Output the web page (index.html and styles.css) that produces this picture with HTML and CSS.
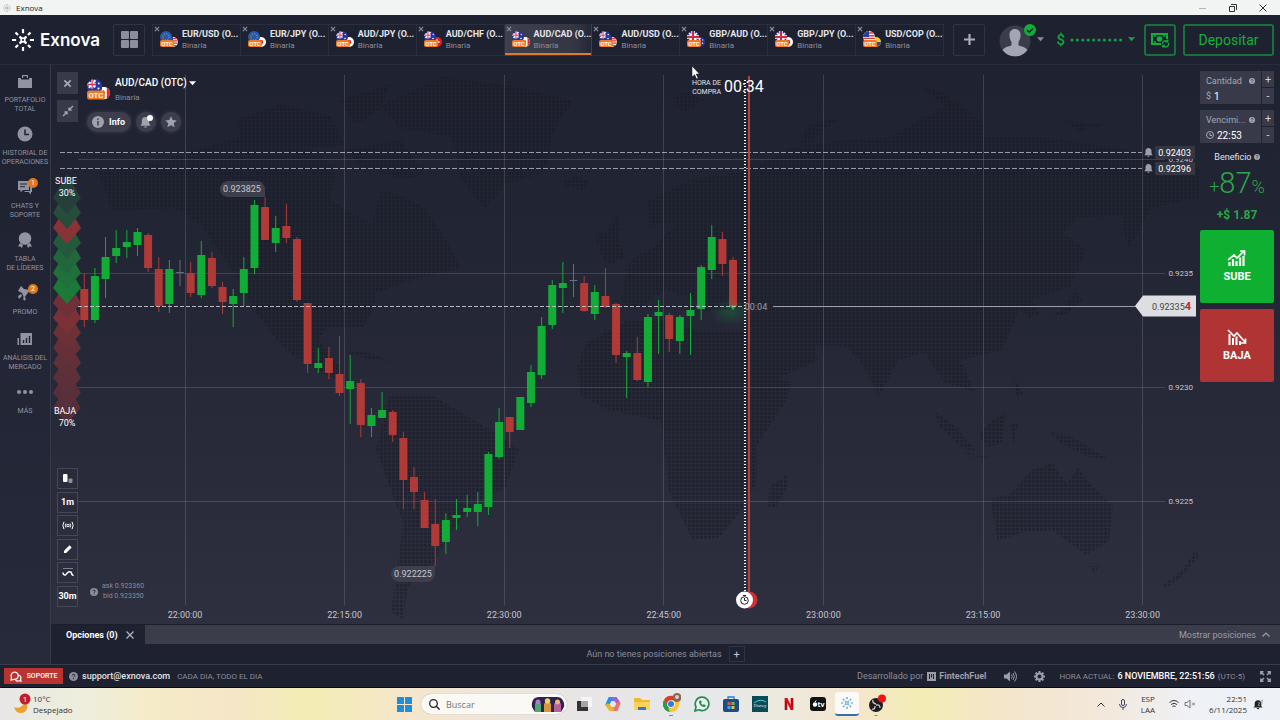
FILE: index.html
```html
<!DOCTYPE html>
<html lang="es">
<head>
    <meta charset="UTF-8">
    <meta name="viewport" content="width=device-width, initial-scale=1.0">
    <title>Exnova</title>
    <link rel="stylesheet" href="styles.css">
</head>
<body>
    <!-- shared icons -->
    <svg class="sprite" aria-hidden="true">
        <symbol id="exnova" viewBox="0 0 24 24">
            <g fill="none" stroke="currentColor" stroke-width="2.4">
                <path d="M12 0v4.500M12 19.500v4.500M0 12h4.500M19.500 12h4.500M3.800 3.800l2.800 2.800M17.400 17.400l2.800 2.800M20.200 3.800l-2.800 2.800M6.600 17.400l-2.800 2.800"/>
                <path stroke-width="1.800" d="M8.500 8q3.500 4.500 7 0M8.500 16q3.500-4.500 7 0M8 8.500q4.500 3.500 0 7M16 8.500q-4.500 3.500 0 7"/>
            </g>
        </symbol>
        <symbol id="close" viewBox="0 0 10 10"><path d="M1.500 1.500l7 7M8.500 1.500l-7 7" stroke="currentColor" stroke-width="2" fill="none"/></symbol>
        <symbol id="caret" viewBox="0 0 8 5"><path d="M0 0h8l-4 4.500z" fill="currentColor"/></symbol>
        <symbol id="help" viewBox="0 0 12 12"><circle cx="6" cy="6" r="6" fill="currentColor"/><path d="M4.200 4.700c0-2.300 3.700-2.300 3.700 0 0 1.300-1.800 1.300-1.800 2.600M6.100 8.300v1.300" fill="none" stroke="#1e2130" stroke-width="1.300"/></symbol>
        <symbol id="bell" viewBox="0 0 12 12"><path d="M6 0c-2.600 0-4 1.800-4 4v3L.5 9.500h11L10 7V4c0-2.200-1.400-4-4-4zM4.500 10.300a1.500 1.500 0 0 0 3 0z" fill="currentColor"/></symbol>
        <symbol id="flag-eur" viewBox="0 0 12 12"><circle cx="6" cy="6" r="6" fill="#2459b5"/><circle cx="6" cy="6" r="3.200" fill="none" stroke="#d8b83c" stroke-width="1" stroke-dasharray="1 1.500"/></symbol>
        <symbol id="flag-usd" viewBox="0 0 12 12"><circle cx="6" cy="6" r="6" fill="#f2f2f4"/><path d="M2 2h8.500M.5 4.700h11M.2 7.400h11.500M1.500 10.200h9" stroke="#d43840" stroke-width="1.400"/><path d="M6 0a6 6 0 0 0-6 6h6z" fill="#2b3f96"/></symbol>
        <symbol id="flag-jpy" viewBox="0 0 12 12"><circle cx="6" cy="6" r="6" fill="#fff"/><circle cx="6" cy="6" r="2.700" fill="#dc2436"/></symbol>
        <symbol id="flag-chf" viewBox="0 0 12 12"><circle cx="6" cy="6" r="6" fill="#d8232e"/><path d="M6 3v6M3 6h6" stroke="#fff" stroke-width="2"/></symbol>
        <symbol id="flag-cad" viewBox="0 0 12 12"><circle cx="6" cy="6" r="6" fill="#fff"/><path d="M3 .8a6 6 0 0 0 0 10.400zM9 .8a6 6 0 0 1 0 10.400zM6 3l1.500 3L6 8 4.500 6z" fill="#dc2a34"/></symbol>
        <symbol id="flag-aud" viewBox="0 0 12 12"><circle cx="6" cy="6" r="6" fill="#2436a8"/><path d="M1.500 2.500l5 4M6.500 1l-5 6M4 .5v7M.3 4.200H7" stroke="#fff" stroke-width="1.600"/><path d="M4 .5v7M.3 4.200H7" stroke="#dc2a44" stroke-width=".9"/><circle cx="9.200" cy="3.500" r=".7" fill="#fff"/><circle cx="9" cy="7.500" r=".8" fill="#fff"/></symbol>
        <symbol id="flag-gbp" viewBox="0 0 12 12"><circle cx="6" cy="6" r="6" fill="#2c3c96"/><path d="M2 2l8 8M10 2l-8 8" stroke="#fff" stroke-width="1.700"/><path d="M6 0v12M0 6h12" stroke="#fff" stroke-width="3.400"/><path d="M6 0v12M0 6h12" stroke="#d22a44" stroke-width="2"/></symbol>
        <symbol id="flag-cop" viewBox="0 0 12 12"><circle cx="6" cy="6" r="6" fill="#f5cc2a"/><path d="M0 6h12a6 6 0 0 1-1.500 4h-9A6 6 0 0 1 0 6z" fill="#2c4aa8"/><path d="M1.500 9.500h9a6 6 0 0 1-9 0z" fill="#d22a34"/></symbol>
    </svg>

    <div class="titlebar">
        <svg class="titlebar-logo" width="8" height="8"><use href="#exnova"/></svg>
        <span>Exnova</span>
        <div class="window-buttons">
            <svg width="8" height="8" viewBox="0 0 8 8"><path d="M0 4.500h7" stroke="#b5b5b8"/></svg>
            <svg width="8" height="8" viewBox="0 0 8 8"><path d="M.5 2.500h5v5h-5zM2 .5h5.500V6" fill="none" stroke="#333"/></svg>
            <svg width="8" height="8" viewBox="0 0 8 8"><path d="M.5.500l7 7M7.500.500l-7 7" stroke="#333"/></svg>
        </div>
    </div>

    <header class="topbar">
        <a class="brand" href="#">
            <svg width="22" height="22"><use href="#exnova"/></svg>
            <span>Exnova</span>
        </a>
        <button class="square-button" aria-label="Vista">
            <svg width="17" height="17" viewBox="0 0 17 17" fill="#8b8d9a"><rect width="8" height="8" rx="1"/><rect x="9" width="8" height="8" rx="1"/><rect y="9" width="8" height="8" rx="1"/><rect x="9" y="9" width="8" height="8" rx="1"/></svg>
        </button>
        <nav class="tabs" id="tabs"></nav>
        <button class="square-button" aria-label="Agregar activo">
            <svg width="11" height="11" viewBox="0 0 11 11"><path d="M5.500 0v11M0 5.500h11" stroke="#a9abb6" stroke-width="2.200"/></svg>
        </button>
        <button class="profile" aria-label="Perfil">
            <svg width="38" height="36" viewBox="0 0 38 36">
                <circle cx="16" cy="20" r="15.500" fill="#3a3c4b"/>
                <path d="M16 8c-4 0-6 3-5.500 7 .3 3 1 4.500 2 6v3.500c-3.500.8-7 2-9 4.500a15.500 15.500 0 0 0 25 0c-2-2.500-5.500-3.700-9-4.500V21c1-1.500 1.700-3 2-6 .5-4-1.500-7-5.500-7z" fill="#a3a5b2"/>
                <circle cx="31" cy="9" r="6" fill="#0fae38"/>
                <path d="M28 9l2.300 2.300L34 7.500" fill="none" stroke="#1e2130" stroke-width="1.500"/>
            </svg>
            <svg class="muted" width="7" height="5"><use href="#caret"/></svg>
        </button>
        <button class="balance">
            <span class="balance-sign">$</span>
            <svg width="53" height="4" viewBox="0 0 53 4"><path d="M2 2h50" stroke="currentColor" stroke-width="3" stroke-linecap="round" stroke-dasharray="0 5.400"/></svg>
            <svg width="7" height="5"><use href="#caret"/></svg>
        </button>
        <button class="cash-button" aria-label="Retirar">
            <svg width="20" height="16" viewBox="0 0 20 16" fill="none" stroke="currentColor">
                <path d="M11 12H2V2h15v5" stroke-width="2"/>
                <circle cx="9.500" cy="7" r="2.800" fill="currentColor" stroke="none"/>
                <path d="M4 4h2M4 10h2M13 4h2" stroke-width="1.600"/>
                <path d="M12.500 12a3 3 0 0 1 5-2.500M18.500 11a3 3 0 0 1-5 3M17.800 7.500v2.300h-2.300M12.800 15.500v-2h2" stroke-width="1.300"/>
            </svg>
        </button>
        <button class="deposit-button">Depositar</button>
    </header>

    <div class="workspace">
        <aside class="sidebar">
            <a class="side-item" href="#">
                <svg width="16" height="16" viewBox="0 0 16 16"><path d="M1 5h3v1.500h8V5h3v10H1zM5 5V2h6v3" fill="currentColor"/><path d="M6.200 5V3.200h3.600V5z" fill="#1f2231"/></svg>
                <span>PORTAFOLIO<br>TOTAL</span>
            </a>
            <a class="side-item" href="#">
                <svg width="16" height="16" viewBox="0 0 16 16"><circle cx="8" cy="8" r="7.500" fill="currentColor"/><path d="M8 3.500V8.500h4" fill="none" stroke="#1f2231" stroke-width="1.500"/></svg>
                <span>HISTORIAL DE<br>OPERACIONES</span>
            </a>
            <a class="side-item" href="#">
                <svg width="16" height="16" viewBox="0 0 16 16"><path d="M1 2h11v9H6l-2.500 2.500V11H1z" fill="currentColor"/><path d="M13 5h2v8h-1v2.500L11.500 13H7.500v-1H13z" fill="currentColor"/><path d="M3 5h7M3 7.700h5" stroke="#1f2231"/></svg>
                <span>CHATS Y<br>SOPORTE</span>
                <i class="badge">1</i>
            </a>
            <a class="side-item" href="#">
                <svg width="16" height="16" viewBox="0 0 16 16" fill="currentColor"><circle cx="8" cy="6.500" r="6.300"/><path d="M3 11l3 2-1 3-1.500-1.500H1zM13 11l-3 2 1 3 1.500-1.500H15z"/></svg>
                <span>TABLA<br>DE LÍDERES</span>
            </a>
            <a class="side-item" href="#">
                <svg width="16" height="16" viewBox="0 0 16 16" fill="currentColor"><path d="M4 1l3 3 6 1-6 8-2-5-4-2zM1 11l3-2 1 2-3 3zM6 13l1.500-1.500L9 14l-2 2z"/></svg>
                <span>PROMO</span>
                <i class="badge">2</i>
            </a>
            <a class="side-item" href="#">
                <svg width="16" height="16" viewBox="0 0 16 16"><path d="M3.500 2h11.500v12H3.500zM.5 7H2v7H.5z" fill="currentColor"/><path d="M6.500 12V9M9.500 12V7M12.500 12V5" stroke="#1f2231" stroke-width="1.400"/></svg>
                <span>ANÁLISIS DEL<br>MERCADO</span>
            </a>
            <a class="side-item" href="#">
                <svg width="16" height="16" viewBox="0 0 16 16" fill="currentColor"><circle cx="2" cy="8" r="2"/><circle cx="8" cy="8" r="2"/><circle cx="14" cy="8" r="2"/></svg>
                <span>MÁS</span>
            </a>
        </aside>

        <main class="content">
            <div class="trading">
                <section class="chart">
                    <svg class="chart-canvas" viewBox="51 65 1149 559" preserveAspectRatio="xMidYMid meet">
                        <defs>
                            <pattern id="dots" width="4" height="4" patternUnits="userSpaceOnUse"><rect width="3" height="3" fill="#171925"/></pattern>
                            <radialGradient id="glow"><stop offset="0" stop-color="#12b03a" stop-opacity=".25"/><stop offset="1" stop-color="#12b03a" stop-opacity="0"/></radialGradient>
                        </defs>
                        <g class="map" fill="url(#dots)">
                            <path d="M99 172L157 162L237 137L318 151L336 172L330 200L355 215L372 225L380 190L400 195L425 208L452 250L461 268L429 275L400 284L376 293L371 314L362 328L327 328L318 340L340 367L336 380L300 360L282 346L255 311L229 265L202 225L175 208L112 211z"/>
                            <path d="M237 120L280 104L330 116L345 145L310 148L240 140zM345 150L400 140L425 175L400 180L360 165zM340 100L390 84L380 110L355 125z"/>
                            <path d="M380 105L443 77L519 87L572 101L554 130L545 172L505 185L485 208L461 179L452 137L400 128z"/>
                            <path d="M563 180l14-4 13 6-8 8-16-3zM340 350l30 3 20 8-22-2zM672 98l14-6 16 8-18 14z"/>
                            <path d="M389 396L434 396L492 431L519 449L505 488L475 503L452 530L434 562L415 575L407 591L403 619L391 612L398 562L403 523L376 449z"/>
                            <path d="M586 343L626 321L673 321L700 332L753 332L768 378L791 382L787 399L757 445L757 481L742 509L719 538L692 539L669 491L661 421L608 410L581 396L577 367z"/>
                            <path d="M768 506l2-20 18-12-2 16-11 18zM599 250l8-20 12-16-1 24 7 20-18 6zM598 233l9 0v10l-10 2z"/>
                            <path d="M623 285L631 260L655 246L677 222L650 225L648 201L692 179L745 172L791 148L845 140L891 137L914 123L956 101L983 123L983 137L1040 137L1136 151L1200 169L1200 197L1151 208L1128 250L1122 215L1078 218L1063 233L1086 250L1071 286L1032 300L1040 314L1030 318L1020 308L1013 325L1002 350L960 360L975 392L944 382L925 353L898 360L879 396L860 360L845 346L814 346L818 360L765 385L753 335L745 307L707 311L688 296L665 290L640 308L622 304z"/>
                            <path d="M798 143l12-18 32-8-20 14-16 18zM922 88l18 2 16 14-8 4zM1065 121l40 4-26 6zM1075 290l8 10-16 14-16 4 14-12z"/>
                            <path d="M933 410l22 16 22 26-14-4-22-20zM979 435l14-16 13-6-4 30-14 4zM964 452l28 6-18-1zM1010 425l8-2-4 22zM1048 431l24 6 36 22-20-2-24-12zM1013 376l10 18-6 4z"/>
                            <path d="M990 499L1009 495L1032 470L1052 463L1067 484L1078 467L1092 486L1113 506L1109 541L1086 555L1052 530L1020 533L998 541zM1090 566h9l-4 8zM1163 584l18-12 14-22 4 6-20 24-14 8z"/>
                        </g>
                        <g class="grid">
                            <path d="M185.500 75V605M344.500 75V605M504.500 75V605M663.500 75V605M823.500 75V605M983.500 75V605M1142.500 75V605"/>
                            <path d="M78 159.500H1165M78 273.500H1165M78 387.500H1165M78 501.500H1165"/>
                        </g>
                        <path class="alert-line" d="M60 152.500H1142M60 168.500H1142"/>
                        <g id="mood"></g>
                        <g id="candles"></g>
                        <ellipse cx="731" cy="312" rx="22" ry="14" fill="url(#glow)"/>
                        <path class="price-dash" d="M78 306.500H742"/>
                        <path class="price-line" d="M773 306.500H1137"/>
                        <g class="peak">
                            <path d="M228 181h29a8 8 0 0 1 8 8v8h-37a8 8 0 0 1 0-16zM399 566h36v8a8 8 0 0 1-8 8h-28a8 8 0 0 1 0-16z"/>
                            <text x="242" y="192">0.923825</text>
                            <text x="413" y="577">0.922225</text>
                        </g>
                        <path class="red-line" d="M749 76V598"/>
                        <path class="dead-line" d="M745 80V592"/>
                        <text class="countdown" x="756" y="310">00:04</text>
                        <circle cx="749" cy="600" r="8.500" fill="#cf3035"/>
                        <circle cx="744.500" cy="600" r="8.500" fill="#fff"/>
                        <g fill="none" stroke="#222"><circle cx="744.500" cy="600.500" r="3.800"/><path d="M743 595.500h3M744.500 600.500v-2.500M744.500 600.500h2"/></g>
                        <g class="axis-x" id="axis-x"></g>
                        <g class="axis-y">
                            <text x="1193" y="162">0.9240</text><text x="1193" y="276">0.9235</text><text x="1193" y="390">0.9230</text><text x="1193" y="504">0.9225</text>
                            <rect x="1155" y="146" width="40" height="13" rx="1"/><rect x="1155" y="162" width="40" height="13" rx="1"/>
                            <text class="alert-price" x="1191" y="156">0.92403</text><text class="alert-price" x="1191" y="172">0.92396</text>
                        </g>
                        <g class="alert-bells"><use href="#bell" x="1144" y="148" width="9" height="9"/><use href="#bell" x="1144" y="164" width="9" height="9"/></g>
                        <path d="M1135 306L1143 295.500H1196V316.500H1143z" fill="#dddee2"/>
                        <text class="price-now" x="1152" y="310">0.92335<tspan>4</tspan></text>
                        <g class="mood-text">
                            <text x="66" y="184">SUBE</text><text x="67" y="196">30%</text>
                            <text x="65" y="414">BAJA</text><text x="67" y="426">70%</text>
                        </g>
                        <g class="buy-time">
                            <text x="721" y="85">HORA DE</text><text x="721" y="94">COMPRA</text>
                            <text class="buy-clock" x="724" y="92">00:34</text>
                        </g>
                        <g class="spread">
                            <use href="#help" x="90" y="588" width="8" height="8"/>
                            <text x="102" y="588">ask 0.923360</text><text x="103" y="598">bid 0.923350</text>
                        </g>
                        <path d="M692 66v11l2.600-2.300 2 4.300 1.600-.8-2-4.200h3.300z" fill="#fff" stroke="#111" stroke-width=".5"/>
                    </svg>

                    <div class="asset">
                        <div class="asset-actions">
                            <button aria-label="Cerrar"><svg width="9" height="9"><use href="#close"/></svg></button>
                            <button aria-label="Reducir"><svg width="12" height="12" viewBox="0 0 12 12"><path d="M1 11l4-4M11 1L7 5M2.500 7H5v2.500M7 2.500V5h2.500" fill="none" stroke="currentColor" stroke-width="1.300"/></svg></button>
                        </div>
                        <div>
                            <button class="asset-name">
                                <svg class="pair-icon" width="23" height="23" viewBox="0 0 18 18"><use href="#flag-cad" x="8" y="6" width="10" height="10"/><use href="#flag-aud" width="12" height="12"/><rect y="9" width="14" height="7" rx="2" fill="#f07a22"/><text class="otc" x="7" y="15">OTC</text></svg>
                                <span class="asset-text">
                                    <b>AUD/CAD (OTC) <svg width="7" height="5"><use href="#caret"/></svg></b>
                                    <small>Binaria</small>
                                </span>
                            </button>
                            <div class="chips">
                                <button class="chip"><svg width="12" height="12" viewBox="0 0 12 12"><circle cx="6" cy="6" r="6" fill="#9fa1ad"/><path d="M6 5v4.500M6 2.500V4" stroke="#3c3e4d" stroke-width="1.500"/></svg> Info</button>
                                <button class="chip round" aria-label="Alertas"><svg width="14" height="14" viewBox="0 0 14 14"><use href="#bell" x="1" y="2" width="11" height="11"/><circle cx="11" cy="3" r="3" fill="#fff"/></svg></button>
                                <button class="chip round" aria-label="Favorito"><svg width="12" height="12" viewBox="0 0 12 12"><path d="M6 .3l1.700 3.800 4.100.4-3.100 2.700.9 4.100L6 9.200l-3.600 2.100.9-4.100L.2 4.500l4.100-.4z" fill="currentColor"/></svg></button>
                            </div>
                        </div>
                    </div>

                    <div class="chart-tools">
                        <button aria-label="Tipo de gráfico"><svg width="11" height="10" viewBox="0 0 11 10"><rect x="1" y="0" width="4.500" height="8" rx="1" fill="#fff"/><rect x="6.500" y="4.500" width="4" height="4.500" rx="1" fill="#8e909c"/></svg></button>
                        <button>1m</button>
                        <button aria-label="Señales"><svg width="12" height="9" viewBox="0 0 12 9" fill="none" stroke="#fff"><circle cx="6" cy="4.500" r="1.200"/><path d="M4 2.500q-1.300 2 0 4M8 2.500q1.300 2 0 4M2 .8Q-.3 4.500 2 8.200M10 .8q2.300 3.700 0 7.400"/></svg></button>
                        <button aria-label="Dibujar"><svg width="10" height="10" viewBox="0 0 10 10"><path d="M1 9V6.800L6.500 1.300l2.200 2.200L3.200 9z" fill="#fff"/></svg></button>
                        <button aria-label="Indicadores"><svg width="12" height="9" viewBox="0 0 12 9" fill="none"><path d="M1 .5h10" stroke="#7d7f8c"/><path d="M1 4.500C1 7 3 8 4.500 5.800S9 3 9.500 5 10.500 7.500 11.500 7" stroke="#fff" stroke-width="1.500"/></svg></button>
                        <button>30m</button>
                    </div>
                </section>

                <section class="deal">
                    <div class="field">
                        <label for="amount">Cantidad <svg width="6" height="6"><use href="#help"/></svg></label>
                        <div class="field-value"><span>$</span><input id="amount" type="text" value="1"></div>
                        <div class="stepper"><button>+</button><button>-</button></div>
                    </div>
                    <div class="field">
                        <label for="expiry">Vencimi... <svg width="6" height="6"><use href="#help"/></svg></label>
                        <div class="field-value"><svg width="8" height="8" viewBox="0 0 8 8" fill="none" stroke="currentColor"><circle cx="4" cy="4" r="3.500"/><path d="M4 4.500V2M4 4.500h2"/></svg><input id="expiry" type="text" value="22:53"></div>
                        <div class="stepper"><button>+</button><button>-</button></div>
                    </div>
                    <div class="profit">
                        <p class="profit-label">Beneficio <svg width="6" height="6"><use href="#help"/></svg></p>
                        <p class="profit-rate"><small>+</small>87<small>%</small></p>
                        <p class="profit-sum">+$ 1.87</p>
                    </div>
                    <button class="call">
                        <svg width="20" height="16" viewBox="0 0 20 16"><path d="M1 10l6-5 3 3 7-7M13 1h4.500v4.500" fill="none" stroke="#fff" stroke-width="1.700"/><path d="M2.500 16v-4M6 16V9M9.500 16v-5M13 16V7.500M16.500 16V6" stroke="#fff" stroke-width="2.200"/></svg>
                        SUBE
                    </button>
                    <button class="put">
                        <svg width="20" height="16" viewBox="0 0 20 16"><path d="M1 1l6 6 3-3 8 9M13 14h5.500V9.500" fill="none" stroke="#fff" stroke-width="1.700"/><path d="M2.500 16V5M6 16V9M9.500 16V7.500M13 16v-4" stroke="#fff" stroke-width="2"/></svg>
                        BAJA
                    </button>
                </section>
            </div>

            <div class="positions-bar">
                <div class="positions-tab">Opciones (0) <button aria-label="Cerrar"><svg width="8" height="8" viewBox="0 0 8 8"><path d="M.5.500l7 7M7.500.500l-7 7" stroke="currentColor" stroke-width="1.200"/></svg></button></div>
                <button class="show-positions">Mostrar posiciones <svg width="8" height="5" viewBox="0 0 8 5"><path d="M.5 4.500L4 1l3.500 3.500" fill="none" stroke="currentColor" stroke-width="1.200"/></svg></button>
            </div>
            <div class="positions-empty">Aún no tienes posiciones abiertas <button aria-label="Agregar">+</button></div>
        </main>
    </div>

    <footer class="statusbar">
        <button class="support"><svg width="12" height="11" viewBox="0 0 12 11" fill="none" stroke="#fff" stroke-width="1.200"><path d="M1 9l.5-2.500A3.600 3.600 0 1 1 4 8.300zM8.500 4a3 3 0 0 1 2 4.500l.5 1.700-2-.5a3 3 0 0 1-3.500-.7"/></svg> SOPORTE</button>
        <svg class="status-help" width="9" height="9"><use href="#help"/></svg>
        <a class="mail" href="#">support@exnova.com</a>
        <span class="hours">CADA DIA, TODO EL DIA</span>
        <span class="powered">Desarrollado por</span>
        <svg width="9" height="9" viewBox="0 0 9 9"><rect width="9" height="9" fill="#9a9ca8"/><path d="M2.500 2v5M4.500 2v3.500M6.500 2v5" stroke="#1e2130"/></svg>
        <b class="fuel">FintechFuel</b>
        <button class="icon-button" aria-label="Sonido"><svg width="13" height="11" viewBox="0 0 13 11"><path d="M0 3.500h2.500L6 .5v10L2.500 7.500H0z" fill="currentColor"/><path d="M7.500 3.500q1.500 2 0 4M9 2q2.700 3.500 0 7M10.500.500q4 5 0 10" fill="none" stroke="currentColor"/></svg></button>
        <button class="icon-button" aria-label="Ajustes"><svg width="11" height="11" viewBox="0 0 11 11"><circle cx="5.500" cy="5.500" r="3" fill="none" stroke="currentColor" stroke-width="2"/><path d="M5.500 0v2M5.500 9v2M0 5.500h2M9 5.500h2M1.600 1.600L3 3M8 8l1.400 1.400M9.400 1.600L8 3M3 8L1.600 9.400" stroke="currentColor" stroke-width="2"/></svg></button>
        <span class="clock">HORA ACTUAL: <b>6 NOVIEMBRE, 22:51:56</b> (UTC-5)</span>
        <button class="icon-button last" aria-label="Pantalla completa"><svg width="11" height="11" viewBox="0 0 11 11" fill="none" stroke="currentColor" stroke-width="1.500"><path d="M.8 3.500V.800H3.500M7.500.800h2.700v2.700M10.200 7.500v2.700H7.500M3.500 10.200H.8V7.500M1 1l3 3M10 1L7 4M10 10L7 7M1 10l3-3"/></svg></button>
    </footer>

    <div class="taskbar">
        <div class="weather">
            <svg width="18" height="22" viewBox="0 0 18 22"><path d="M1 14c4 2 9 0 11-5 5 5 1 12-5 11-3 0-5-3-6-6z" fill="#eea02c"/><circle cx="12" cy="6" r="5.500" fill="#c01f26"/><text x="12" y="9">1</text></svg>
            <p>10°C<br>Despejado</p>
        </div>
        <div class="apps">
            <svg width="15" height="15" viewBox="0 0 15 15" fill="#1f8fdc"><rect width="7" height="7"/><rect x="8" width="7" height="7"/><rect y="8" width="7" height="7"/><rect x="8" y="8" width="7" height="7"/></svg>
            <label class="search">
                <svg width="11" height="11" viewBox="0 0 11 11" fill="none" stroke="#222" stroke-width="1.300"><circle cx="4.500" cy="4.500" r="3.800"/><path d="M7.300 7.300l3.300 3.300"/></svg>
                <input type="text" placeholder="Buscar">
                <svg width="34" height="16" viewBox="0 0 34 16"><path d="M1 11C0 5 3 1 8 1h18c5 0 8 5 7 10l-3 5H4z" fill="#2d2350"/><path d="M4 16V8q3-6 6 0v8z" fill="#4ca86c"/><circle cx="7" cy="6" r="2.500" fill="#b07ad0"/><path d="M13 16V8q4-6 7 0v8z" fill="#d8963c"/><circle cx="16.500" cy="5" r="2.700" fill="#f2d060"/><path d="M23 16V8q4-6 7 0v8z" fill="#b65fa0"/><circle cx="26.500" cy="6" r="2.500" fill="#f2b078"/></svg>
            </label>
            <svg width="16" height="16" viewBox="0 0 16 16"><path d="M5 1h11v10H5z" fill="#f6f6f6"/><path d="M1 5h11v10H1z" fill="#333"/><path d="M5 5h7v6H5z" fill="#a5a5a8"/></svg>
            <svg width="16" height="16" viewBox="0 0 16 16" fill="none" stroke-width="4" stroke-linecap="round"><path d="M2.500 8.500L5 3h3.500" stroke="#2a8de0"/><path d="M9 3h1.500l2.500 3.500" stroke="#a060d8"/><path d="M13.500 7.500L11 13H8" stroke="#f0706c"/><path d="M7 13H5.500L3 9.500" stroke="#e8b62c"/></svg>
            <svg width="16" height="16" viewBox="0 0 16 16"><path d="M0 2h6l2 2h8v10H0z" fill="#f2b92f"/><path d="M0 6h16v8H0z" fill="#fbd25a"/><path d="M4 11h8v3H4z" fill="#2e7ccc"/></svg>
            <svg width="18" height="24" viewBox="0 0 18 24"><circle cx="8" cy="12" r="8" fill="#fbc52c"/><path d="M1 8a8 8 0 0 1 14 0H8l-3.500 6z" fill="#e0392f"/><path d="M1 8l5 7-1 4.500A8 8 0 0 1 1 8z" fill="#2c9e4b"/><path d="M3 13l4 7A8 8 0 0 1 1 16z" fill="#2c9e4b"/><circle cx="8" cy="12" r="3.800" fill="#fff"/><circle cx="8" cy="12" r="3" fill="#3478e0"/><circle cx="14" cy="5.500" r="4.500" fill="#8a6458"/><circle cx="14" cy="5" r="2" fill="#e8cdbc"/><path d="M6 23.500h4" stroke="#888"/></svg>
            <svg width="16" height="16" viewBox="0 0 16 16"><path d="M1 15l1-4a6.800 6.800 0 1 1 2.700 2.800z" fill="#e8f3ec" stroke="#2a8a54" stroke-width="1.700"/><path d="M5 5c0 4 3 6 6 6l.8-1.800-2-1-1 .8L7 7.200l.7-1-.8-2z" fill="#2a8a54"/></svg>
            <svg width="16" height="16" viewBox="0 0 16 16"><path d="M5 4V1h6v3" fill="none" stroke="#2a7cc4" stroke-width="1.300"/><rect y="3" width="16" height="13" rx="2" fill="#1c4c88"/><path d="M4.500 6h3v3h-3z" fill="#e8503a"/><path d="M8.500 6h3v3h-3z" fill="#7cba3c"/><path d="M4.500 10h3v3h-3z" fill="#3aa4e8"/><path d="M8.500 10h3v3h-3z" fill="#f4bc30"/></svg>
            <svg class="disney" width="16" height="16" viewBox="0 0 16 16"><rect width="16" height="16" fill="#0d4a58"/><path d="M2 7q6-5 12-1" fill="none" stroke="#3fd0d0"/><text x="8" y="11">Disney</text></svg>
            <svg width="16" height="16" viewBox="0 0 16 16"><path d="M5 2v12M11 2v12" stroke="#b00710" stroke-width="2.600"/><path d="M3.700 2h2.600l6 12H9.700z" fill="#e50914"/></svg>
            <svg class="apple-tv" width="16" height="16" viewBox="0 0 16 16"><rect y="1" width="16" height="14" rx="3" fill="#111"/><circle cx="5" cy="8.500" r="2.200" fill="#fff"/><path d="M5 6l1.200-1.500" stroke="#fff"/><text x="11" y="11">tv</text></svg>
            <span class="active-app"><svg width="12" height="12"><use href="#exnova"/></svg></span>
            <svg width="18" height="24" viewBox="0 0 18 24"><circle cx="8" cy="13" r="7" fill="#1c1c1f"/><path d="M8 12q-4-1-3-4M8 13q4-1 4 3M7 14q0 4-3 3" fill="none" stroke="#c8c8cc" stroke-width="1.300"/><circle cx="14" cy="6.500" r="4" fill="#f01414"/><path d="M6.500 23.500h3" stroke="#888"/></svg>
        </div>
        <div class="tray">
            <svg width="8" height="5" viewBox="0 0 8 5"><path d="M.5 4.500L4 1l3.500 3.500" fill="none" stroke="#333"/></svg>
            <svg width="8" height="11" viewBox="0 0 8 11" fill="none" stroke="#446"><rect x="2.500" y=".5" width="3" height="6" rx="1.500"/><path d="M.5 5q0 3.500 3.500 3.500T7.500 5M4 8.500V11"/></svg>
            <p>ESP<br>LAA</p>
            <svg width="26" height="10" viewBox="0 0 26 10" fill="none" stroke="#333"><path d="M.5 3.500q4.500-4 9 0M2 5.500q3-2.500 6 0M3.500 7.500q1.500-1.200 3 0"/><path d="M16 3.500h2l3-2.500v8l-3-2.500h-2zM23 3.500l3 3M26 3.500l-3 3" stroke="#777"/></svg>
            <p class="date">22:51<br>6/11/2025</p>
            <svg width="10" height="11" viewBox="0 0 12 12"><path d="M6 1C3.500 1 2 2.500 2 5v3L.5 9.500h11L10 8V5c0-2.500-1.500-4-4-4zM4.500 10.300a1.500 1.500 0 0 0 3 0z" fill="#222"/><path d="M6 4h2.500L6 7h2.500M9.500 1H12L9.500 4H12" fill="none" stroke="#999"/></svg>
        </div>
    </div>

    <script src="script.js"></script>
</body>
</html>
```

FILE: styles.css
```css
* {
    box-sizing: border-box;
}
body {
    margin: 0;
    min-height: 100vh;
    display: flex;
    flex-direction: column;
    background: #1e2130;
    color: #fff;
    font-family: Roboto, Arial, sans-serif;
    font-size: 9px;
    overflow: hidden;
}
button {
    font: inherit;
    color: inherit;
    background: none;
    border: none;
    padding: 0;
    cursor: pointer;
}
button, a {
    display: flex;
    align-items: center;
}
a {
    color: inherit;
    text-decoration: none;
}
p {
    margin: 0;
}
svg {
    flex: none;
}
.sprite {
    position: absolute;
    width: 0;
    height: 0;
}
.muted {
    color: #8b8d9a;
}

/* window title */
.titlebar {
    height: 15px;
    display: flex;
    align-items: center;
    gap: 5px;
    padding: 0 13px 0 3px;
    background: #f2f3f3;
    color: #222;
    font-family: "Open Sans", sans-serif;
    font-size: 8px;
}
.titlebar-logo {
    color: #999;
}
.window-buttons {
    display: flex;
    gap: 22px;
    margin-left: auto;
}

/* top bar */
.topbar {
    height: 50px;
    display: flex;
    align-items: center;
    padding: 0 6px 0 12px;
    border-bottom: 1px solid #2a2c3b;
}
.brand {
    width: 101px;
    gap: 6px;
    font-family: Inter, sans-serif;
    font-size: 17px;
    font-weight: 600;
}
.square-button {
    width: 32px;
    height: 32px;
    justify-content: center;
    border: 1px solid #303342;
    border-radius: 2px;
}
.tabs {
    flex: 1;
    display: flex;
    max-width: 792px;
    margin: 0 9px 0 7px;
}
.tab {
    position: relative;
    flex: 1;
    min-width: 0;
    height: 32px;
    border: 1px solid #2b2e3d;
    border-left-width: 0;
}
.tab:first-child {
    border-left-width: 1px;
}
.tab-main {
    width: 100%;
    height: 100%;
    padding-left: 7px;
    gap: 4px;
    text-align: left;
}
.tab.active {
    background: linear-gradient(90deg, #3e404e, #343644 80%, #242737);
    border-color: transparent;
    box-shadow: inset 0 -2px #e07a24;
}
.tab-close {
    position: absolute;
    top: 1px;
    left: 1px;
    color: #8b8d9a;
}
.pair-icon {
    overflow: visible;
}
.otc {
    fill: #fff;
    font-size: 6px;
    font-weight: 700;
    text-anchor: middle;
}
.tab b, .tab small {
    display: block;
    line-height: 11px;
}
.tab b {
    font-size: 9px;
    font-weight: 700;
    color: #e4e5ea;
    white-space: nowrap;
}
.tab small {
    font-size: 8px;
    color: #8b8d9a;
}
.profile {
    margin-left: 14px;
    padding-bottom: 1px;
}
.balance {
    gap: 5px;
    margin: 0 9px 0 auto;
    color: #10a83a;
}
.balance-sign {
    font-size: 15px;
    font-weight: 500;
}
.cash-button, .deposit-button {
    height: 32px;
    justify-content: center;
    border: 2px solid #17713a;
    border-radius: 3px;
    color: #12b03a;
}
.cash-button {
    width: 32px;
    margin-right: 7px;
}
.deposit-button {
    width: 91px;
    font-size: 14px;
}

/* left menu */
.workspace {
    flex: 1;
    display: flex;
    min-height: 0;
    background: linear-gradient(#1f2231, #222534 30%, #2f3040);
}
.sidebar {
    width: 51px;
    display: flex;
    flex-direction: column;
    padding-top: 8px;
    background: linear-gradient(#1e2130, #262a3a);
    border-right: 1px solid #373a49;
    color: #9193a0;
}
.side-item {
    position: relative;
    height: 53px;
    flex-direction: column;
    gap: 7px;
    text-align: center;
    font-size: 7px;
    line-height: 9px;
    white-space: nowrap;
}
.side-item:nth-child(5) {
    height: 46px;
}
.badge {
    position: absolute;
    top: -1px;
    left: 28px;
    width: 10px;
    height: 10px;
    border-radius: 5px;
    background: #e07818;
    color: #fff;
    font-size: 7px;
    font-style: normal;
    line-height: 10px;
}

/* chart */
.content {
    flex: 1;
    min-width: 0;
    display: flex;
    flex-direction: column;
}
.trading {
    flex: 1;
    min-height: 0;
    display: flex;
}
.chart {
    position: relative;
    flex: 1;
    min-width: 0;
}
.chart-canvas {
    display: block;
    width: 100%;
    height: 100%;
    font-size: 9px;
}
.map {
    opacity: .45;
}
.grid path {
    stroke: #fff;
    stroke-opacity: .14;
}
.alert-line {
    stroke: #b8bac2;
    stroke-dasharray: 5 2;
    stroke-opacity: .8;
}
.price-dash {
    stroke: #b8bac2;
    stroke-dasharray: 4 2;
}
.price-line {
    stroke: #9c9eaa;
}
.red-line {
    stroke: #b5423f;
    stroke-width: 2;
}
.dead-line {
    stroke: #fff;
    stroke-width: 2;
    stroke-dasharray: 1 2;
}
.up {
    fill: #12ad36;
}
.down {
    fill: #b13a36;
}
.flat {
    fill: #6a6c78;
}
.peak path {
    fill: #3d3f4d;
}
.peak text, .axis-x text {
    fill: #c6c7ce;
    text-anchor: middle;
}
.countdown {
    fill: #9c9eaa;
    text-anchor: middle;
}
.axis-y text {
    fill: #c6c7ce;
    font-size: 8px;
    text-anchor: end;
}
.axis-y rect {
    fill: #343644;
}
.axis-y .alert-price {
    fill: #fff;
    font-size: 9px;
}
.alert-bells {
    color: #9c9eaa;
}
.price-now {
    fill: #444;
}
.price-now tspan {
    fill: #d0202c;
    font-size: 11px;
    font-weight: 700;
}
.mood-text text {
    fill: #fff;
    text-anchor: middle;
}
.buy-time text {
    fill: #e2e3e8;
    font-size: 7px;
    text-anchor: end;
}
.buy-time .buy-clock {
    fill: #fff;
    font-size: 16px;
    text-anchor: start;
}
.spread {
    color: #8b8d9a;
    fill: #8b8d9a;
    font-size: 7px;
}
.asset {
    position: absolute;
    top: 7px;
    left: 6px;
    display: flex;
    gap: 9px;
}
.asset-actions {
    display: flex;
    flex-direction: column;
    gap: 6px;
}
.asset-actions button {
    width: 21px;
    height: 22px;
    justify-content: center;
    background: #383a49;
    color: #a5a7b2;
}
.asset-name {
    gap: 5px;
    padding-top: 4px;
    text-align: left;
}
.asset-text b, .asset-text small {
    display: block;
}
.asset-text b {
    font-size: 10px;
    font-weight: 500;
    line-height: 14px;
}
.asset-text b svg {
    vertical-align: middle;
}
.asset-text small {
    font-size: 8px;
    line-height: 15px;
    color: #8b8d9a;
}
.chips {
    display: flex;
    gap: 5px;
    padding-top: 7px;
}
.chip {
    height: 20px;
    gap: 5px;
    padding: 0 6px 0 5px;
    border-radius: 10px;
    background: #3c3e4d;
    box-shadow: 0 0 4px #3c3e4d;
    font-weight: 700;
}
.chip.round {
    width: 20px;
    padding: 0;
    justify-content: center;
    color: #9fa1ad;
}
.chart-tools {
    position: absolute;
    left: 6px;
    bottom: 17px;
    height: 139px;
    display: flex;
    flex-direction: column;
    justify-content: space-between;
}
.chart-tools button {
    width: 21px;
    height: 21px;
    justify-content: center;
    border: 1px solid #454756;
    font-weight: 700;
}

/* deal panel */
.deal {
    width: 80px;
    padding: 6px 6px 0 0;
}
.field {
    display: grid;
    grid-template: 17px 16px / 1fr 12px;
    column-gap: 1px;
    margin-bottom: 6px;
}
.field label, .field-value {
    display: flex;
    align-items: center;
    background: #383a49;
    padding: 0 6px;
    color: #a5a7b2;
}
.field label {
    justify-content: space-between;
    padding-top: 3px;
    white-space: nowrap;
}
.field-value {
    gap: 3px;
}
.field-value input {
    width: 100%;
    min-width: 0;
    padding: 0;
    border: none;
    outline: none;
    background: none;
    color: #fff;
    font: 10px Roboto, Arial, sans-serif;
}
.stepper {
    grid-area: 1 / 2 / 3 / 3;
    display: grid;
    gap: 1px;
}
.stepper button {
    justify-content: center;
    background: #383a49;
    color: #d0d1d8;
    font-size: 11px;
}
.profit {
    padding-top: 1px;
    text-align: center;
    color: #2da44a;
}
.profit-label {
    color: #e2e3e8;
    line-height: 14px;
}
.profit-label svg {
    color: #a5a7b2;
}
.profit-rate {
    font-size: 29px;
    font-weight: 300;
    line-height: 38px;
}
.profit-rate small {
    font-size: 18px;
}
.profit-sum {
    font-size: 12px;
    font-weight: 700;
    line-height: 18px;
    margin-bottom: 6px;
}
.call, .put {
    width: 100%;
    height: 73px;
    flex-direction: column;
    justify-content: center;
    gap: 4px;
    margin-bottom: 6px;
    border-radius: 2px;
    background: #0fb032;
    font-size: 11px;
    font-weight: 700;
}
.put {
    background: #b13434;
}

/* positions */
.positions-bar {
    height: 20px;
    display: flex;
    justify-content: space-between;
    background: #3b3d4b;
    border-top: 1px solid #1c1e2c;
}
.positions-tab {
    display: flex;
    align-items: center;
    gap: 8px;
    padding: 0 11px 0 15px;
    background: #1e2130;
    font-weight: 700;
}
.positions-tab button {
    color: #b5b7c0;
}
.show-positions {
    gap: 6px;
    margin-right: 10px;
    color: #9c9eaa;
}
.positions-empty {
    height: 20px;
    display: flex;
    align-items: center;
    justify-content: center;
    gap: 7px;
    background: #1e2130;
    color: #8b8d9a;
}
.positions-empty button {
    width: 16px;
    height: 16px;
    justify-content: center;
    border: 1px solid #303342;
    color: #c6c7ce;
    font-size: 11px;
}

/* status bar */
.statusbar {
    height: 24px;
    display: flex;
    align-items: center;
    padding: 0 9px 0 4px;
    background: #1e2130;
    border-top: 1px solid #373a49;
    border-bottom: 1px solid #0a0b12;
    color: #8b8d9a;
}
.support {
    width: 59px;
    height: 16px;
    justify-content: center;
    gap: 5px;
    background: #b93431;
    color: #fff;
    font-size: 7px;
    font-weight: 500;
}
.status-help {
    margin: 0 4px 0 6px;
}
.mail {
    margin-right: 7px;
    color: #e2e3e8;
    font-weight: 500;
}
.hours, .clock {
    font-size: 8px;
}
.powered {
    margin: 0 4px 0 auto;
}
.fuel {
    margin-left: 3px;
    font-weight: 700;
    color: #9c9eaa;
}
.icon-button {
    margin-left: 17px;
    color: #9c9eaa;
}
.clock {
    margin-left: 15px;
}
.clock b {
    margin: 0 1px;
    color: #fff;
    font-size: 9px;
    font-weight: 500;
}
.icon-button.last {
    margin-left: 15px;
}

/* desktop taskbar */
.taskbar {
    height: 32px;
    display: grid;
    grid-template-columns: 1fr auto 1fr;
    align-items: center;
    background: linear-gradient(90deg, #e8e6e6, #eeeede 6%, #f5ebc8 12%, #f5e6c8 18%, #f3edb4 24%, #f5e6cc 32%, #e8e5e6 45%, #e6e8ea 56%, #eee9dc 62%, #f5e6cc 67%, #f3edb4 72%, #f4e6ca 78%, #f3e8da 86%, #eef1f6 93%, #eef2f8);
    color: #333;
    font-family: "Open Sans", sans-serif;
    font-size: 8px;
    line-height: 11px;
}
.weather, .tray {
    display: flex;
    align-items: center;
}
.weather {
    gap: 2px;
    padding-left: 13px;
}
.weather text {
    fill: #fff;
    font-size: 8px;
    text-anchor: middle;
}
.apps {
    display: flex;
    align-items: center;
    gap: 13px;
    margin-left: 3px;
}
.search {
    width: 146px;
    height: 20px;
    display: flex;
    align-items: center;
    gap: 6px;
    margin: 0 -4px;
    padding: 0 2px 0 8px;
    border-radius: 10px;
    background: #fbf9f5;
    box-shadow: 0 0 1px #999;
}
.search input {
    flex: 1;
    min-width: 0;
    padding: 0;
    border: none;
    outline: none;
    background: none;
    font: 9px "Open Sans", sans-serif;
}
.disney text, .apple-tv text {
    fill: #fff;
    font-size: 4px;
    text-anchor: middle;
}
.apple-tv text {
    font-size: 7px;
    font-weight: 700;
}
.active-app {
    width: 24px;
    height: 24px;
    display: flex;
    align-items: center;
    justify-content: center;
    margin: 0 -4px;
    border-radius: 3px;
    border-bottom: 2px solid #3a6ea8;
    background: #fbfaf8;
    color: #4a9ad4;
}
.tray {
    justify-content: flex-end;
    gap: 14px;
    padding-right: 17px;
}
.tray p {
    text-align: center;
}
.tray .date {
    text-align: right;
}
.tray svg:last-child {
    margin-left: -8px;
}
```

FILE: script.js
```js
const pairs = ["EUR/USD", "EUR/JPY", "AUD/JPY", "AUD/CHF", "AUD/CAD", "AUD/USD", "GBP/AUD", "GBP/JPY", "USD/COP"];
const activePair = "AUD/CAD";

document.getElementById("tabs").innerHTML = pairs.map(pair => {
    const [base, quote] = pair.toLowerCase().split("/");
    return `<div class="tab ${pair === activePair ? "active" : ""}">
        <button class="tab-main">
            <svg class="pair-icon" width="18" height="18" viewBox="0 0 18 18">
                <use href="#flag-${quote}" x="8" y="6" width="10" height="10"/>
                <use href="#flag-${base}" width="12" height="12"/>
                <rect y="9" width="14" height="7" rx="2" fill="#f07a22"/>
                <text class="otc" x="7" y="15">OTC</text>
            </svg>
            <span><b>${pair} (O...</b><small>Binaria</small></span>
        </button>
        <button class="tab-close" aria-label="Cerrar"><svg width="6" height="6"><use href="#close"/></svg></button>
    </div>`;
}).join("");

// wick top, wick bottom, body top, body bottom, direction
const candles = [
    [273, 327, 289, 320, "down"], [268, 323, 276, 320, "up"], [237, 298, 257, 279, "up"], [230, 263, 248, 256, "up"],
    [230, 258, 242, 247, "up"], [228, 256, 232, 245, "up"], [233, 272, 235, 268, "down"], [257, 312, 269, 306, "down"],
    [260, 313, 269, 304, "up"], [260, 286, 272, 273, "flat"], [262, 297, 273, 293, "down"], [241, 298, 255, 295, "up"],
    [252, 288, 258, 286, "down"], [282, 314, 287, 302, "down"], [289, 327, 296, 304, "up"], [257, 306, 269, 293, "up"],
    [200, 274, 205, 268, "up"], [197, 240, 207, 240, "down"], [216, 252, 228, 243, "up"], [204, 243, 226, 238, "down"],
    [237, 302, 239, 300, "down"], [303, 373, 303, 364, "down"], [348, 373, 363, 368, "up"], [347, 379, 358, 373, "down"],
    [336, 396, 374, 393, "down"], [355, 424, 381, 389, "up"], [379, 437, 383, 425, "down"], [408, 437, 415, 426, "up"],
    [392, 418, 410, 418, "up"], [410, 442, 412, 435, "down"], [432, 509, 438, 480, "down"], [467, 509, 477, 492, "down"],
    [492, 528, 500, 528, "down"], [499, 566, 524, 546, "down"], [513, 554, 520, 542, "up"], [499, 530, 515, 518, "up"],
    [495, 517, 508, 512, "up"], [492, 526, 504, 512, "up"], [452, 515, 454, 507, "up"], [408, 459, 422, 457, "up"],
    [417, 448, 417, 432, "down"], [397, 430, 397, 430, "up"], [365, 407, 372, 403, "up"], [317, 379, 326, 375, "up"],
    [280, 329, 285, 325, "up"], [262, 313, 283, 288, "up"], [264, 297, 280, 281, "flat"], [276, 312, 283, 311, "down"],
    [285, 320, 292, 314, "up"], [268, 308, 296, 307, "down"], [303, 363, 304, 355, "down"], [351, 398, 353, 357, "up"],
    [337, 381, 353, 380, "down"], [314, 387, 317, 382, "up"], [300, 354, 312, 316, "up"], [313, 352, 315, 339, "down"],
    [315, 354, 317, 341, "up"], [293, 355, 310, 316, "up"], [265, 320, 267, 309, "up"], [225, 279, 237, 270, "up"],
    [232, 276, 239, 264, "down"], [257, 310, 260, 306, "down"]
];
const candleStep = 10.635;
document.getElementById("candles").innerHTML = candles.map(([high, low, top, bottom, dir], i) => {
    const x = 84.3 + i * candleStep;
    return `<g class="${dir}"><rect x="${x - 0.5}" y="${high}" width="1" height="${low - high}"/>
        <rect x="${x - 4}" y="${top}" width="8" height="${bottom - top}" rx="0.5"/></g>`;
}).join("") + `<path class="up" d="M729 305h8l-4 5z"/>`;

const times = ["22:00:00", "22:15:00", "22:30:00", "22:45:00", "23:00:00", "23:15:00", "23:30:00"];
document.getElementById("axis-x").innerHTML = times.map((time, i) =>
    `<text x="${185 + i * 159.6}" y="618">${time}</text>`).join("");

// buyers on top, sellers below, the lower ones drawn first
const mood = ["#263f3b", "#264c3b", "#8a3337", "#235a3b", "#21673b", "#1f703a", "#1c7a39",
    "#6f3037", "#7a3237", "#6c3037", "#653038", "#603039", "#5c3039", "#582f3a", "#532f3a"];
document.getElementById("mood").innerHTML = mood.map((color, i) => {
    const y = 198 + i * 15;
    return `<path d="M67 ${y - 24}l14 24-14 16-14-16z" fill="${color}"/>`;
}).reverse().join("");
```
